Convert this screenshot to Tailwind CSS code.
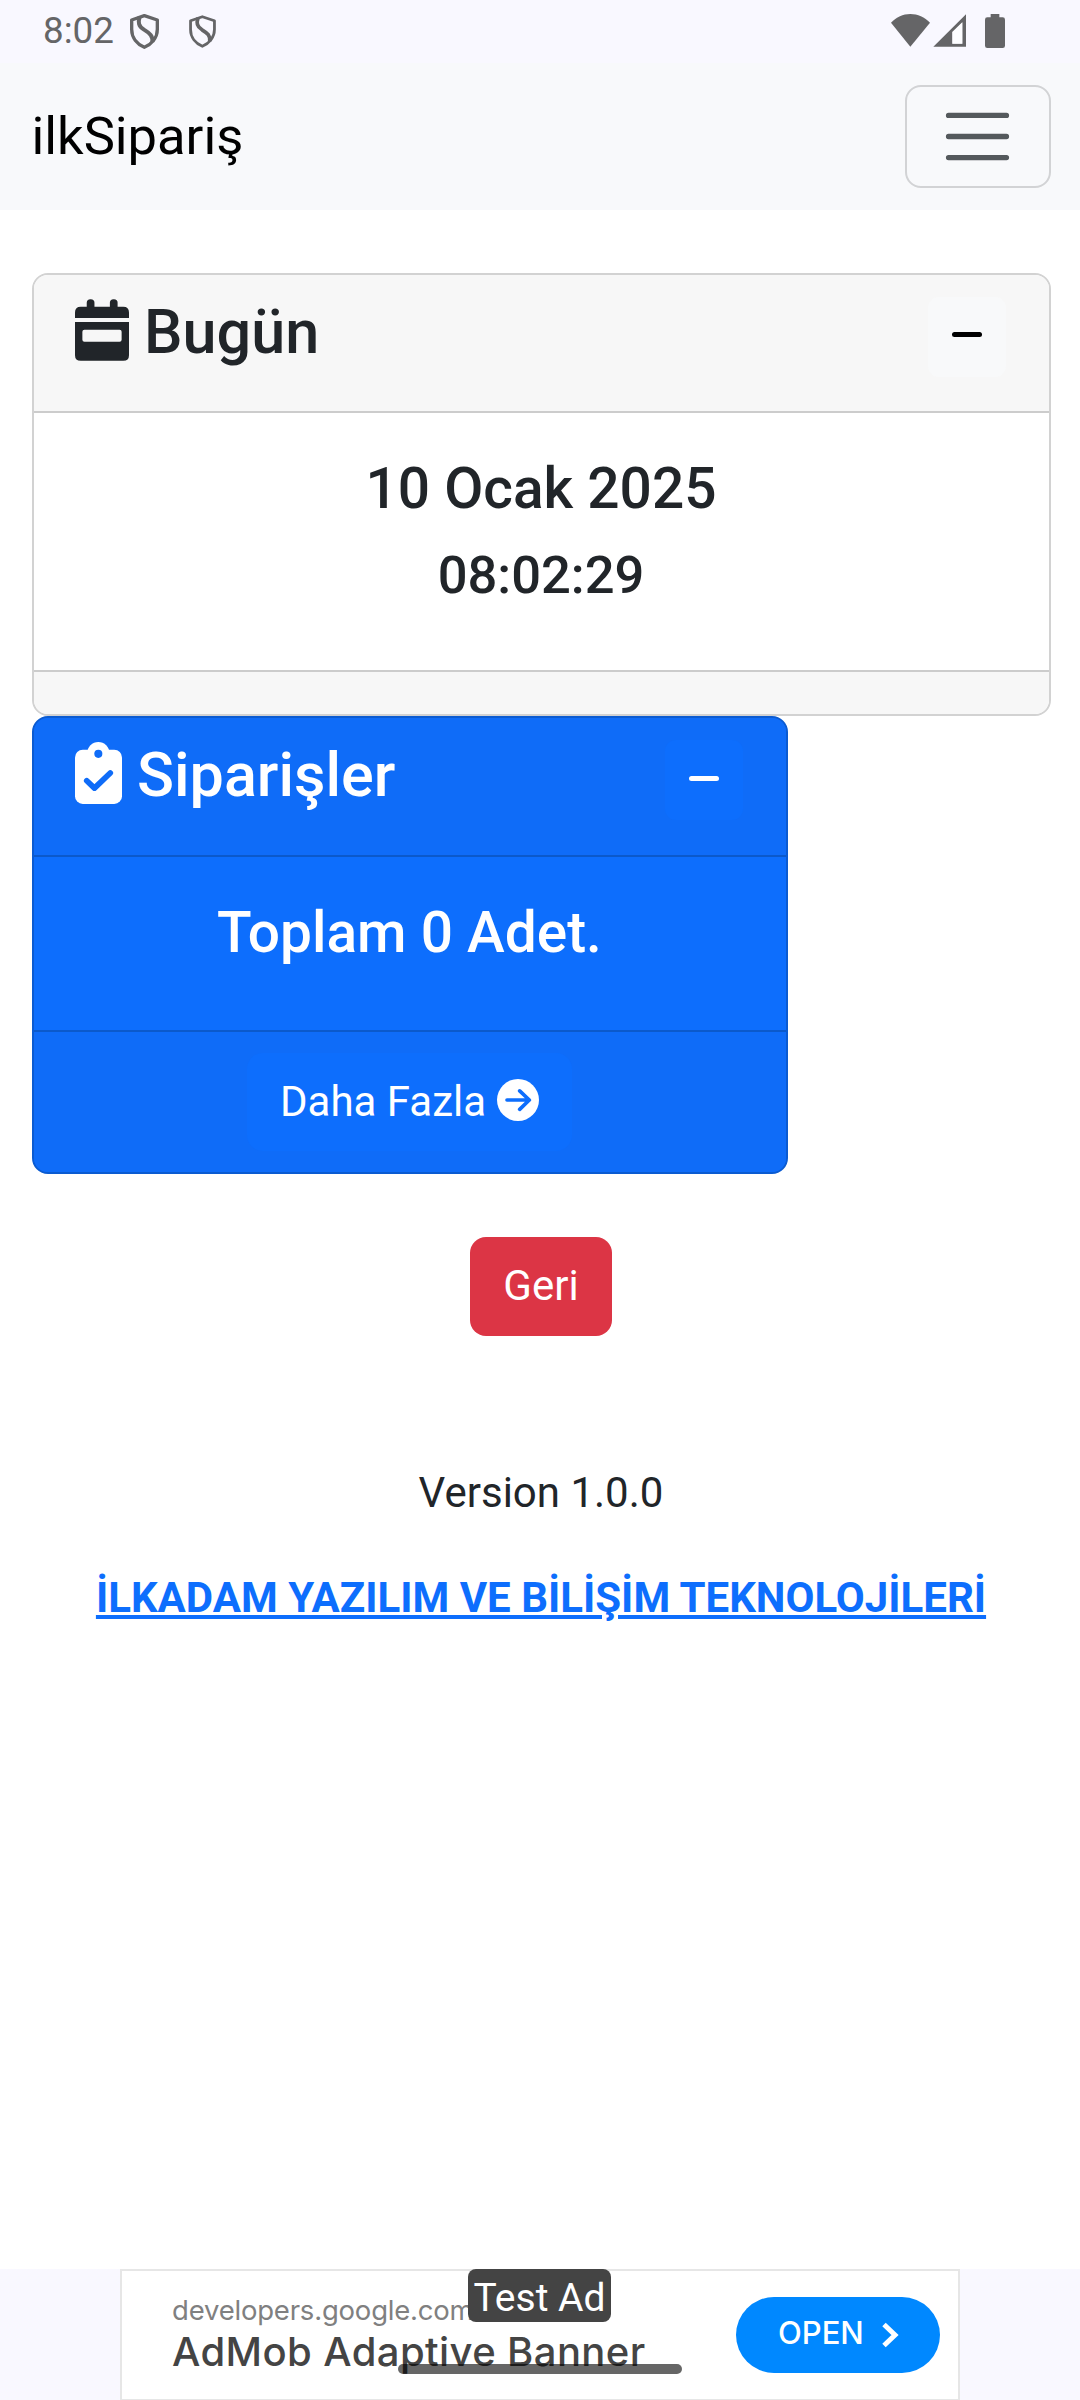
<!DOCTYPE html>
<html lang="tr">
<head>
<meta charset="utf-8">
<title>ilkSipariş</title>
<script src="https://cdn.jsdelivr.net/npm/@tailwindcss/browser@4"></script>
</head>
<body class="bg-white">
<div class="relative flex h-[2400px] w-[1080px] flex-col overflow-hidden bg-white font-[Roboto,sans-serif] text-[42px] leading-[63px] text-[#212529]">

  <!-- status bar -->
  <div class="flex h-[63px] shrink-0 items-start bg-[#f9f8ff] pl-[43px] pr-[75px] text-[#656567]">
    <span class="mt-[9px] w-[87px] text-[36.75px] leading-[43px]">8:02</span>
    <svg class="mt-[14px] h-[35px] w-[29px]" viewBox="0 0 87 105" fill="none" stroke="currentColor" stroke-width="10" stroke-linejoin="round"><path d="M43 5 82 18V46C82 72 64 91 43 100C22 91 5 72 5 46V18Z"/><path d="M29 8C24 25 25 36 42 47C60 58 69 66 67 84" stroke-width="12"/></svg>
    <svg class="ml-[30px] mt-[15px] h-[33px] w-[27px]" viewBox="0 0 87 105" fill="none" stroke="currentColor" stroke-width="9" stroke-linejoin="round"><path d="M43 5 82 18V46C82 72 64 91 43 100C22 91 5 72 5 46V18Z"/><path d="M29 8C24 25 25 36 42 47C60 58 69 66 67 84" stroke-width="12"/></svg>
    <div class="ml-auto flex items-start">
      <svg class="mt-[14px] h-[33px] w-[39px]" viewBox="0 0 117 99" fill="currentColor"><path d="M58 98 0 26C16 9 36 0 58 0S101 9 117 26Z"/></svg>
      <svg class="ml-[3px] mt-[14px] h-[33px] w-[33px]" viewBox="0 0 99 99" fill="currentColor"><path fill-rule="evenodd" d="M1 98 99 1V98ZM58 54V89H88V25Z"/><path d="M58 54V89H88V25Z" fill="#fff" fill-opacity=".7"/></svg>
      <svg class="ml-[19px] mt-[14px] h-[34px] w-[20px]" viewBox="0 0 60 102" fill="currentColor"><path d="M17 0H43V10H53Q60 10 60 17V95Q60 102 53 102H7Q0 102 0 95V17Q0 10 7 10H17Z"/></svg>
    </div>
  </div>

  <!-- navbar -->
  <nav class="flex h-[147px] shrink-0 items-center justify-between bg-[#f8f9fb] pl-[31.5px] pr-[29px]">
    <a class="text-[52.5px] leading-[79px] text-black">ilkSipariş</a>
    <button class="flex h-[103px] w-[146px] items-center justify-center rounded-[16px] border-2 border-[#d2d3d5] pr-[2px]">
      <svg class="size-[79px]" viewBox="0 0 30 30" stroke="#54595c" stroke-width="2" stroke-linecap="round"><path d="M4 7h22M4 15h22M4 23h22"/></svg>
    </button>
  </nav>

  <main class="flex grow flex-col pl-8 pr-[29px] pt-[63px]">
    <!-- today card -->
    <section class="flex h-[443px] shrink-0 flex-col overflow-hidden rounded-[16px] border-2 border-[#d2d2d2]">
      <header class="flex h-[138px] items-start justify-between border-b-2 border-[#ccc] bg-[#f7f7f7] pl-[41px] pr-[43px] pt-[21px]">
        <h3 class="flex text-[61.1px] font-medium leading-[73px]">
          <svg class="mr-[15px] mt-[3px] h-[62px] w-[54px]" viewBox="0 0 161 184" fill="#212529"><rect x="35" width="23" height="40" rx="11"/><rect x="104" width="23" height="40" rx="11"/><path d="M0 56V40Q0 23 17 23H144Q161 23 161 40V56Z"/><path fill-rule="evenodd" d="M0 68H161V167Q161 184 144 184H17Q0 184 0 167ZM28 91Q22 91 22 97V121Q22 127 28 127H133Q139 127 139 121V97Q139 91 133 91Z"/></svg>
          Bugün
        </h3>
        <button class="mt-px flex h-[80px] w-[78px] justify-center rounded-[11px] bg-[#f8f9fa] pt-[35px]"><span class="h-[5px] w-[30px] rounded-full bg-black"></span></button>
      </header>
      <div class="flex h-[257px] flex-col items-center pr-px pt-[42px] font-medium">
        <h4 class="text-[56.8px] leading-[68px]">10 Ocak 2025</h4>
        <h5 class="mt-[21px] text-[52.5px] leading-[63px]">08:02:29</h5>
      </div>
      <footer class="grow border-t-2 border-[#ccc] bg-[#f7f7f7]"></footer>
    </section>

    <!-- orders card -->
    <section class="flex h-[458px] w-[756px] shrink-0 flex-col overflow-hidden rounded-[16px] border-2 border-[#0b5bd1] bg-[#0d6efd] text-white">
      <header class="flex h-[139px] items-start justify-between border-b-2 border-[#0b59cb] bg-[#0f6cf8] pl-[41px] pr-[43px] pt-[21px]">
        <h3 class="flex text-[61.1px] font-medium leading-[73px]">
          <svg class="mr-[15px] mt-[3px] h-[62px] w-[47px]" viewBox="0 0 140 184"><rect y="23" width="140" height="161" rx="23" fill="#fff"/><circle cx="69.500" cy="33" r="33" fill="#fff"/><circle cx="69.500" cy="35" r="12" fill="#0f6cf8"/><path d="M35 115 58 137 105 92" fill="none" stroke="#0f6cf8" stroke-width="17" stroke-linecap="round" stroke-linejoin="round"/></svg>
          Siparişler
        </h3>
        <button class="mt-px flex h-[80px] w-[78px] justify-center rounded-[11px] bg-[#0d6efd] pt-[36px]"><span class="h-[5px] w-[30px] rounded-full bg-white"></span></button>
      </header>
      <div class="flex h-[173px] justify-center pr-px pt-[42px]">
        <h4 class="text-[56.8px] font-medium leading-[68px]">Toplam 0 Adet.</h4>
      </div>
      <footer class="flex grow justify-center border-t-2 border-[#0b59cb] bg-[#0f6cf8] pr-px pt-[21px]">
        <a class="flex h-[98px] items-start rounded-[16px] bg-[#0d6efd] px-[33px] pt-[17px]">Daha Fazla
          <svg class="ml-[11px] mt-[9px] size-[42px]" viewBox="0 0 126 126"><circle cx="63" cy="63" r="63" fill="#fff"/><path d="M30 63H96M68 35.500 97 63 68 91" fill="none" stroke="#0d6efd" stroke-width="11" stroke-linecap="round" stroke-linejoin="round"/></svg>
        </a>
      </footer>
    </section>

    <div class="flex flex-col items-center pr-px">
      <button class="mr-px mt-[63px] h-[99px] w-[142px] rounded-[16px] bg-[#dc3545] pb-[2px] pl-px text-white">Geri</button>
      <p class="mt-[125px]">Version 1.0.0</p>
      <a class="mt-[42px] whitespace-nowrap font-bold text-[#0d6efd] underline">İLKADAM YAZILIM VE BİLİŞİM TEKNOLOJİLERİ</a>
    </div>
  </main>

  <!-- ad banner -->
  <aside class="flex h-[131px] shrink-0 justify-center bg-[#f9f8ff]">
    <div class="relative flex w-[840px] items-start justify-between border-2 border-[#e6e6e6] border-b-[1px] bg-white pl-[50px] pr-[18px] font-[Inter,sans-serif]">
      <div class="flex flex-col whitespace-nowrap pt-[22px]">
        <span class="text-[27.500px] leading-[35px] tracking-[-0.2px] text-[#808080]">developers.google.com</span>
        <span class="text-[40px] font-medium leading-[48px] tracking-[0.4px] text-[#444]">AdMob Adaptive Banner</span>
      </div>
      <button class="mt-[26px] flex h-[76px] w-[204px] items-center rounded-full bg-[#08f] pb-[5px] pl-[42px] text-[31px] font-medium text-white">OPEN
        <svg class="ml-[18px] mt-[5px] h-[26px] w-[17px]" viewBox="0 0 17 26" fill="none" stroke="#fff" stroke-width="5"><path d="M2 2.500 13 13 2 23.500"/></svg>
      </button>
      <span class="absolute -top-[2px] left-[346px] flex h-[53px] w-[143px] items-center justify-center whitespace-nowrap rounded-[8px] bg-[#444] pt-[5px] font-[Roboto,sans-serif] text-[39px] text-white">Test Ad</span>
    </div>
  </aside>

  <!-- gesture handle -->
  <div class="absolute bottom-[26px] left-[398px] h-[10px] w-[284px] rounded-full bg-black/60"></div>
</div>
</body>
</html>
